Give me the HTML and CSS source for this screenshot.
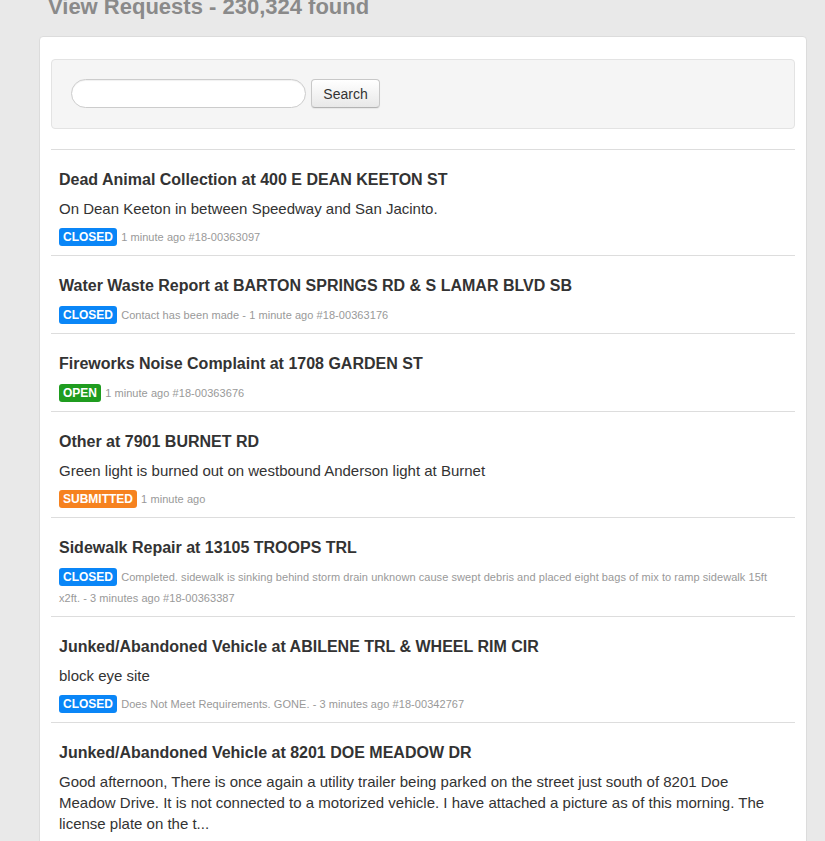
FILE: index.html
```html
<!DOCTYPE html>
<html>
<head>
<meta charset="utf-8">
<link rel="stylesheet" href="styles.css">
</head>
<body>
<h1 class="page-title">View Requests - 230,324 found</h1>
<div class="card">
  <form class="well">
    <input class="search-input" type="text">
    <button class="search-btn" type="button">Search</button>
  </form>
  <ul class="requests">
    <li class="request">
      <h3 class="req-title">Dead Animal Collection at 400 E DEAN KEETON ST</h3>
      <p class="req-desc">On Dean Keeton in between Speedway and San Jacinto.</p>
      <div class="req-meta"><span class="label label-closed">CLOSED</span> 1 minute ago #18-00363097</div>
    </li>
    <li class="request">
      <h3 class="req-title">Water Waste Report at BARTON SPRINGS RD &amp; S LAMAR BLVD SB</h3>
      <div class="req-meta"><span class="label label-closed">CLOSED</span> Contact has been made - 1 minute ago #18-00363176</div>
    </li>
    <li class="request">
      <h3 class="req-title">Fireworks Noise Complaint at 1708 GARDEN ST</h3>
      <div class="req-meta"><span class="label label-open">OPEN</span> 1 minute ago #18-00363676</div>
    </li>
    <li class="request">
      <h3 class="req-title">Other at 7901 BURNET RD</h3>
      <p class="req-desc">Green light is burned out on westbound Anderson light at Burnet</p>
      <div class="req-meta"><span class="label label-submitted">SUBMITTED</span> 1 minute ago</div>
    </li>
    <li class="request">
      <h3 class="req-title">Sidewalk Repair at 13105 TROOPS TRL</h3>
      <div class="req-meta"><span class="label label-closed">CLOSED</span> Completed. sidewalk is sinking behind storm drain unknown cause swept debris and placed eight bags of mix to ramp sidewalk 15ft x2ft. - 3 minutes ago #18-00363387</div>
    </li>
    <li class="request">
      <h3 class="req-title">Junked/Abandoned Vehicle at ABILENE TRL &amp; WHEEL RIM CIR</h3>
      <p class="req-desc">block eye site</p>
      <div class="req-meta"><span class="label label-closed">CLOSED</span> Does Not Meet Requirements. GONE. - 3 minutes ago #18-00342767</div>
    </li>
    <li class="request">
      <h3 class="req-title">Junked/Abandoned Vehicle at 8201 DOE MEADOW DR</h3>
      <p class="req-desc">Good afternoon, There is once again a utility trailer being parked on the street just south of 8201 Doe Meadow Drive. It is not connected to a motorized vehicle. I have attached a picture as of this morning. The license plate on the t...</p>
      <div class="req-meta"><span class="label label-open">OPEN</span> 4 minutes ago</div>
    </li>
  </ul>
</div>
</body>
</html>
```
FILE: styles.css
```css
html, body {
  margin: 0;
  padding: 0;
  background: #e9e9e9;
  font-family: "Liberation Sans", Arial, sans-serif;
  color: #333;
  overflow: hidden;
}

.page-title {
  margin: -6px 0 16px 48px;
  font-size: 22px;
  line-height: 26px;
  font-weight: bold;
  color: #8a8a8a;
}

.card {
  margin-left: 39px;
  width: 744px;
  background: #fff;
  border: 1px solid #dcdcdc;
  border-radius: 4px;
  padding: 22px 11px 0 11px;
  min-height: 900px;
}

.well {
  margin: 0;
  display: flex;
  align-items: center;
  gap: 5px;
  padding: 19px 19px 20px 19px;
  background: #f5f5f5;
  border: 1px solid #e3e3e3;
  border-radius: 4px;
}

.search-input {
  box-sizing: border-box;
  width: 235px;
  height: 29px;
  margin: 0;
  padding: 4px 12px;
  border: 1px solid #cccccc;
  border-radius: 15px;
  background: #fff;
  box-shadow: inset 0 1px 1px rgba(0,0,0,0.06);
}

.search-btn {
  box-sizing: border-box;
  width: 69px;
  height: 29px;
  margin: 0;
  padding: 0;
  font-family: "Liberation Sans", Arial, sans-serif;
  font-size: 14px;
  color: #333;
  background: linear-gradient(#ffffff, #e8e8e8);
  border: 1px solid #c8c8c8;
  border-bottom-color: #b3b3b3;
  border-radius: 4px;
  box-shadow: 0 1px 1px rgba(0,0,0,0.06);
}

.requests {
  list-style: none;
  margin: 20px 0 0 0;
  padding: 0;
}

.request {
  border-top: 1px solid #dddddd;
  padding: 20px 8px 7px 8px;
}

.req-title {
  margin: 0 0 8px 0;
  font-size: 16px;
  line-height: 20px;
  font-weight: bold;
  color: #333;
}

.req-desc {
  margin: 0 0 8px 0;
  font-size: 15px;
  line-height: 21px;
  color: #333;
}

.req-meta {
  font-size: 11px;
  line-height: 21px;
  letter-spacing: 0.06px;
  color: #999;
}

.req-title + .req-meta {
  margin-top: 9px;
}

.label {
  display: inline-block;
  padding: 2px 4px;
  font-size: 12px;
  line-height: 14px;
  font-weight: bold;
  letter-spacing: 0;
  color: #fff;
  border-radius: 3px;
  margin-right: 1px;
}

.label-closed { background: #0a86f7; }
.label-open { background: #1f9c1f; }
.label-submitted { background: #f6821f; }
```
